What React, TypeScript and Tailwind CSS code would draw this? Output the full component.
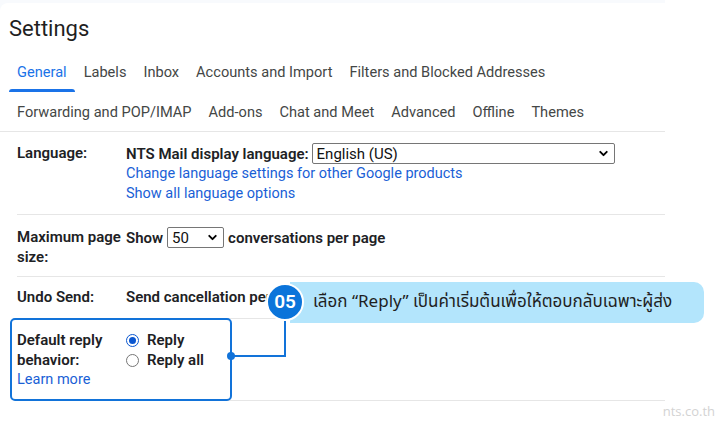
import { ChevronDown } from 'lucide-react';

const tabsTop = [
  { label: 'General', active: true },
  { label: 'Labels' },
  { label: 'Inbox' },
  { label: 'Accounts and Import' },
  { label: 'Filters and Blocked Addresses' },
];

const tabsBottom = ['Forwarding and POP/IMAP', 'Add-ons', 'Chat and Meet', 'Advanced', 'Offline', 'Themes'];

function Select({ value, className }: { value: string; className: string }) {
  return (
    <div
      className={`flex h-[21px] items-center justify-between border border-[#767676] rounded-[2px] bg-white pl-[4px] pr-[4px] font-normal text-[15px] text-[#111] ${className}`}
    >
      <span>{value}</span>
      <ChevronDown size={13} strokeWidth={3.5} className="text-black" />
    </div>
  );
}

function Radio({ checked }: { checked?: boolean }) {
  return (
    <span
      className={`flex h-[13px] w-[13px] items-center justify-center rounded-full border ${
        checked ? 'border-[#0b57d0]' : 'border-[#767676]'
      }`}
    >
      {checked && <span className="h-[7px] w-[7px] rounded-full bg-[#0b57d0]" />}
    </span>
  );
}

function Row({ label, children, className = '' }: { label: React.ReactNode; children: React.ReactNode; className?: string }) {
  return (
    <div className={`flex border-b border-[#e6e6e6] text-[14.5px] leading-[20px] ${className}`}>
      <div className="w-[109px] shrink-0 text-[15px] font-semibold text-[#202124]">{label}</div>
      <div className="flex-1 text-[#202124]">{children}</div>
    </div>
  );
}

export default function App() {
  return (
    <div className="relative h-[423px] w-[720px] overflow-hidden bg-white font-['Roboto',sans-serif]">
      <div className="w-[665px] bg-[#f8fafd] pt-[3px]">
        <div className="rounded-tl-lg bg-white">
          {/* Titre */}
          <h1 className="pl-[9px] pt-[12px] text-[22px] leading-[28px] text-[#1f1f1f]">Settings</h1>

          {/* Onglets */}
          <div className="mt-[10px] flex pl-[8.5px] text-[14.6px] text-[#444746]">
            {tabsTop.map((tab) => (
              <div
                key={tab.label}
                className={`relative flex h-[39px] items-center px-[8.5px] ${tab.active ? 'text-[#1a73e8]' : ''}`}
              >
                {tab.label}
                {tab.active && <span className="absolute bottom-0 left-0 right-0 h-[3px] rounded-t-sm bg-[#1a73e8]" />}
              </div>
            ))}
          </div>
          <div className="flex border-b border-[#e6e6e6] pl-[8.5px] text-[14.6px] text-[#444746]">
            {tabsBottom.map((t) => (
              <div key={t} className="flex h-[39px] items-center px-[8.5px] pt-[3px]">
                {t}
              </div>
            ))}
          </div>

          {/* Lignes */}
          <div className="pl-[17px]">
            <Row label="Language:" className="pt-[11px] pb-[10px]">
              <div className="flex items-center text-[15px] font-semibold">
                NTS Mail display language:
                <Select value="English (US)" className="ml-[3px] w-[303px]" />
              </div>
              <div className="text-[#1a5fd6]">Change language settings for other Google products</div>
              <div className="text-[#1a5fd6]">Show all language options</div>
            </Row>

            <Row label="Maximum page size:" className="pt-[12px] pb-[9px]">
              <div className="flex items-center text-[15px] font-semibold">
                Show
                <Select value="50" className="mx-[4px] w-[57px]" />
                conversations per page
              </div>
            </Row>

            <Row label="Undo Send:" className="pt-[10px] pb-[11px]">
              <div className="text-[15px] font-semibold">Send cancellation period: 5 seconds</div>
            </Row>

            <Row
              label={
                <>
                  Default reply behavior:
                  <div className="text-[14.5px] font-normal text-[#1a5fd6]">Learn more</div>
                </>
              }
              className="pt-[11px] pb-[10px]"
            >
              <div className="flex items-center gap-[8px] text-[15px] font-semibold">
                <Radio checked />
                Reply
              </div>
              <div className="flex items-center gap-[8px] text-[15px] font-semibold">
                <Radio />
                Reply all
              </div>
            </Row>
          </div>
        </div>
      </div>

      {/* Encadré de surbrillance */}
      <div className="absolute left-[10px] top-[318px] h-[83px] w-[222px] rounded-[5px] border-2 border-[#1273d9]" />
      <span className="absolute left-[227px] top-[352px] h-[8px] w-[8px] rounded-full bg-[#1273d9]" />
      <span className="absolute left-[231px] top-[355px] h-[2px] w-[55px] bg-[#1273d9]" />
      <span className="absolute left-[284px] top-[318px] h-[39px] w-[2px] bg-[#1273d9]" />

      {/* Bulle d'instruction */}
      <div className="absolute left-[290px] top-[282px] flex h-[41px] w-[414px] items-center rounded-r-[10px] bg-[#b3e5fc] pl-[23px] font-['Noto_Sans_Thai','Tahoma','Noto_Sans',sans-serif] text-[17px] text-[#1f1f1f]">
        เลือก “Reply” เป็นค่าเริ่มต้นเพื่อให้ตอบกลับเฉพาะผู้ส่ง
      </div>
      <div className="absolute left-[266px] top-[283px] flex h-[38px] w-[38px] items-center justify-center rounded-full border-2 border-white bg-[#0b74da] text-[19px] font-semibold text-white">
        05
      </div>

      <div className="absolute right-[5px] top-[402px] font-['Open_Sans',sans-serif] text-[13px] text-[#d3d3d3]">nts.co.th</div>
    </div>
  );
}
